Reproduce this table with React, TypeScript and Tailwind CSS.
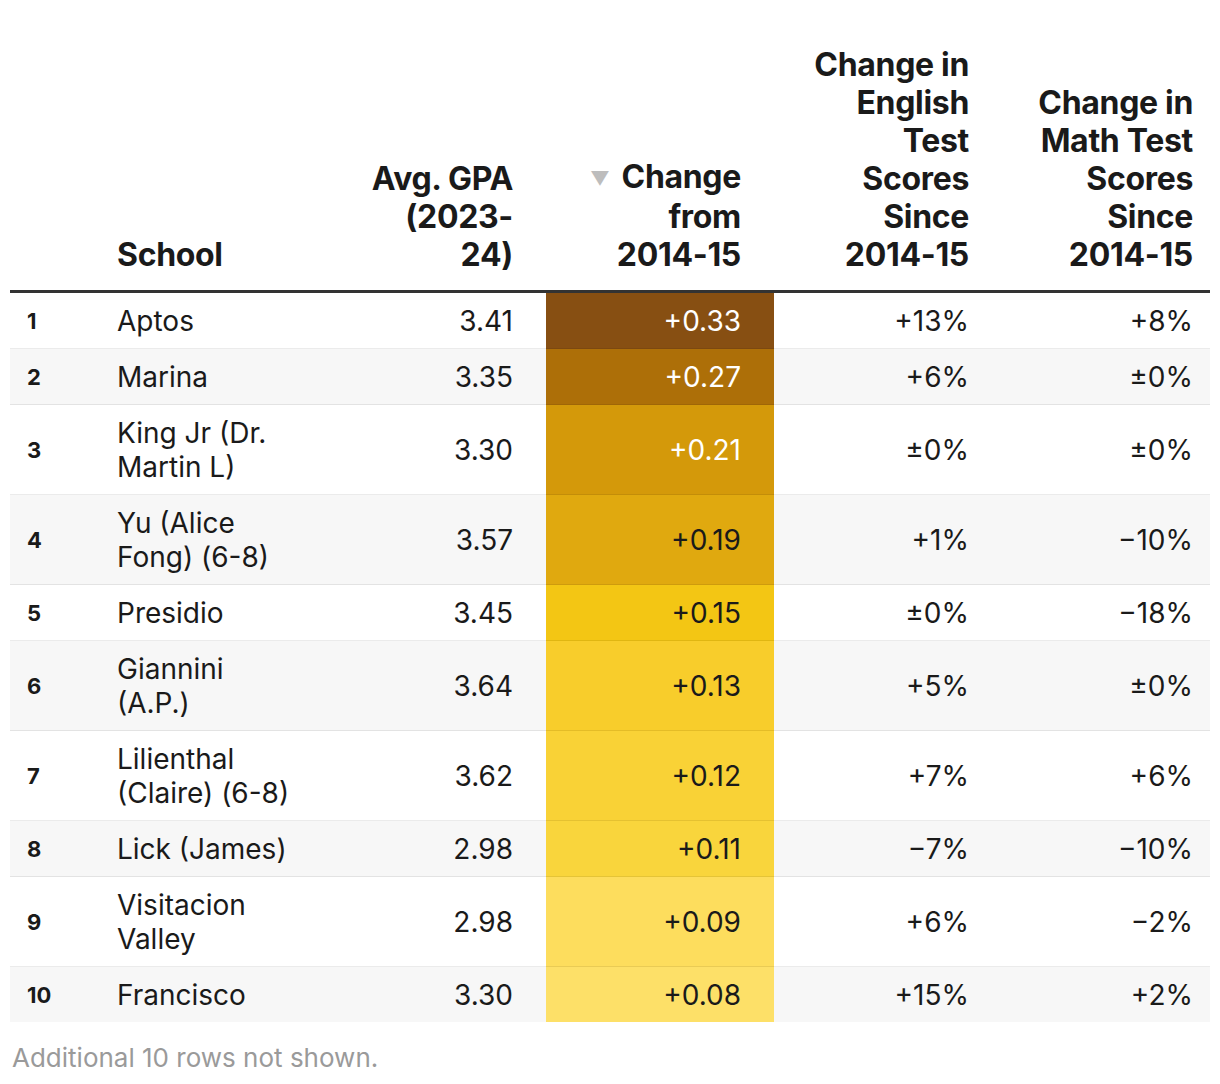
import React from 'react';

type Row = {
  rank: number;
  school: string;
  gpa: string;
  change: string;
  english: string;
  math: string;
  bg: string;
  light: boolean;
};

const rows: Row[] = [
  { rank: 1, school: 'Aptos', gpa: '3.41', change: '+0.33', english: '+13%', math: '+8%', bg: 'bg-[#874f12]', light: true },
  { rank: 2, school: 'Marina', gpa: '3.35', change: '+0.27', english: '+6%', math: '±0%', bg: 'bg-[#ad6f08]', light: true },
  { rank: 3, school: 'King Jr (Dr. Martin L)', gpa: '3.30', change: '+0.21', english: '±0%', math: '±0%', bg: 'bg-[#d4990a]', light: true },
  { rank: 4, school: 'Yu (Alice Fong) (6-8)', gpa: '3.57', change: '+0.19', english: '+1%', math: '−10%', bg: 'bg-[#e0a90f]', light: false },
  { rank: 5, school: 'Presidio', gpa: '3.45', change: '+0.15', english: '±0%', math: '−18%', bg: 'bg-[#f3c614]', light: false },
  { rank: 6, school: 'Giannini (A.P.)', gpa: '3.64', change: '+0.13', english: '+5%', math: '±0%', bg: 'bg-[#f8cd2b]', light: false },
  { rank: 7, school: 'Lilienthal (Claire) (6-8)', gpa: '3.62', change: '+0.12', english: '+7%', math: '+6%', bg: 'bg-[#f9d236]', light: false },
  { rank: 8, school: 'Lick (James)', gpa: '2.98', change: '+0.11', english: '−7%', math: '−10%', bg: 'bg-[#f9d53c]', light: false },
  { rank: 9, school: 'Visitacion Valley', gpa: '2.98', change: '+0.09', english: '+6%', math: '−2%', bg: 'bg-[#fddd5d]', light: false },
  { rank: 10, school: 'Francisco', gpa: '3.30', change: '+0.08', english: '+15%', math: '+2%', bg: 'bg-[#fde068]', light: false },
];

export default function App() {
  return (
    <div className="min-h-screen bg-white px-[10px] pt-[46px] font-['Inter',sans-serif] text-[#1a1a1a]">
      <table className="w-[1200px] table-fixed border-collapse">
        <colgroup>
          <col className="w-[95px]" />
          <col className="w-[225px]" />
          <col className="w-[216px]" />
          <col className="w-[228px]" />
          <col className="w-[228px]" />
          <col className="w-[208px]" />
        </colgroup>
        <thead>
          <tr className="border-b-[3px] border-[#333333] align-bottom text-[32px] font-bold leading-[38px] tracking-[-0.01em]">
            <th className="pb-[16px]" />
            <th className="pb-[16px] pl-[12px] text-left">School</th>
            <th className="pb-[16px] pl-[35px] pr-[33px] text-right">Avg. GPA (2023-24)</th>
            <th className="pb-[16px] pl-[30px] pr-[33px] text-right">
              <span className="mr-[12px] align-[3px] text-[19px] text-[#bdbdbd]">▼</span>
              Change from 2014-15
            </th>
            <th className="pb-[16px] pl-[35px] pr-[33px] text-right">Change in English Test Scores Since 2014-15</th>
            <th className="pb-[16px] pl-[26px] pr-[17px] text-right">Change in Math Test Scores Since 2014-15</th>
          </tr>
        </thead>
        <tbody className="text-[28px] leading-[34px]">
          {rows.map((r, i) => {
            const stripe = i % 2 === 1 ? 'bg-[#f7f7f7]' : 'bg-white';
            const border = i < rows.length - 1 ? 'border-b border-black/[0.08]' : '';
            return (
              <tr key={r.rank} className={stripe}>
                <td className={`${border} pb-[10px] pl-[17px] pt-[11px] align-middle text-[22px] font-bold`}>{r.rank}</td>
                <td className={`${border} pb-[10px] pl-[12px] pr-[36px] pt-[11px] align-middle`}>{r.school}</td>
                <td className={`${border} pb-[10px] pr-[33px] pt-[11px] text-right align-middle`}>{r.gpa}</td>
                <td
                  className={`${border} ${r.bg} pb-[10px] pr-[33px] pt-[11px] text-right align-middle ${
                    r.light ? 'text-white' : 'text-[#1a1a1a]'
                  }`}
                >
                  {r.change}
                </td>
                <td className={`${border} pb-[10px] pr-[33px] pt-[11px] text-right align-middle`}>{r.english}</td>
                <td className={`${border} pb-[10px] pr-[17px] pt-[11px] text-right align-middle`}>{r.math}</td>
              </tr>
            );
          })}
        </tbody>
      </table>
      <p className="mt-[21px] pl-[2px] text-[26px] leading-[30px] text-[#9a9a9a]">Additional 10 rows not shown.</p>
    </div>
  );
}
